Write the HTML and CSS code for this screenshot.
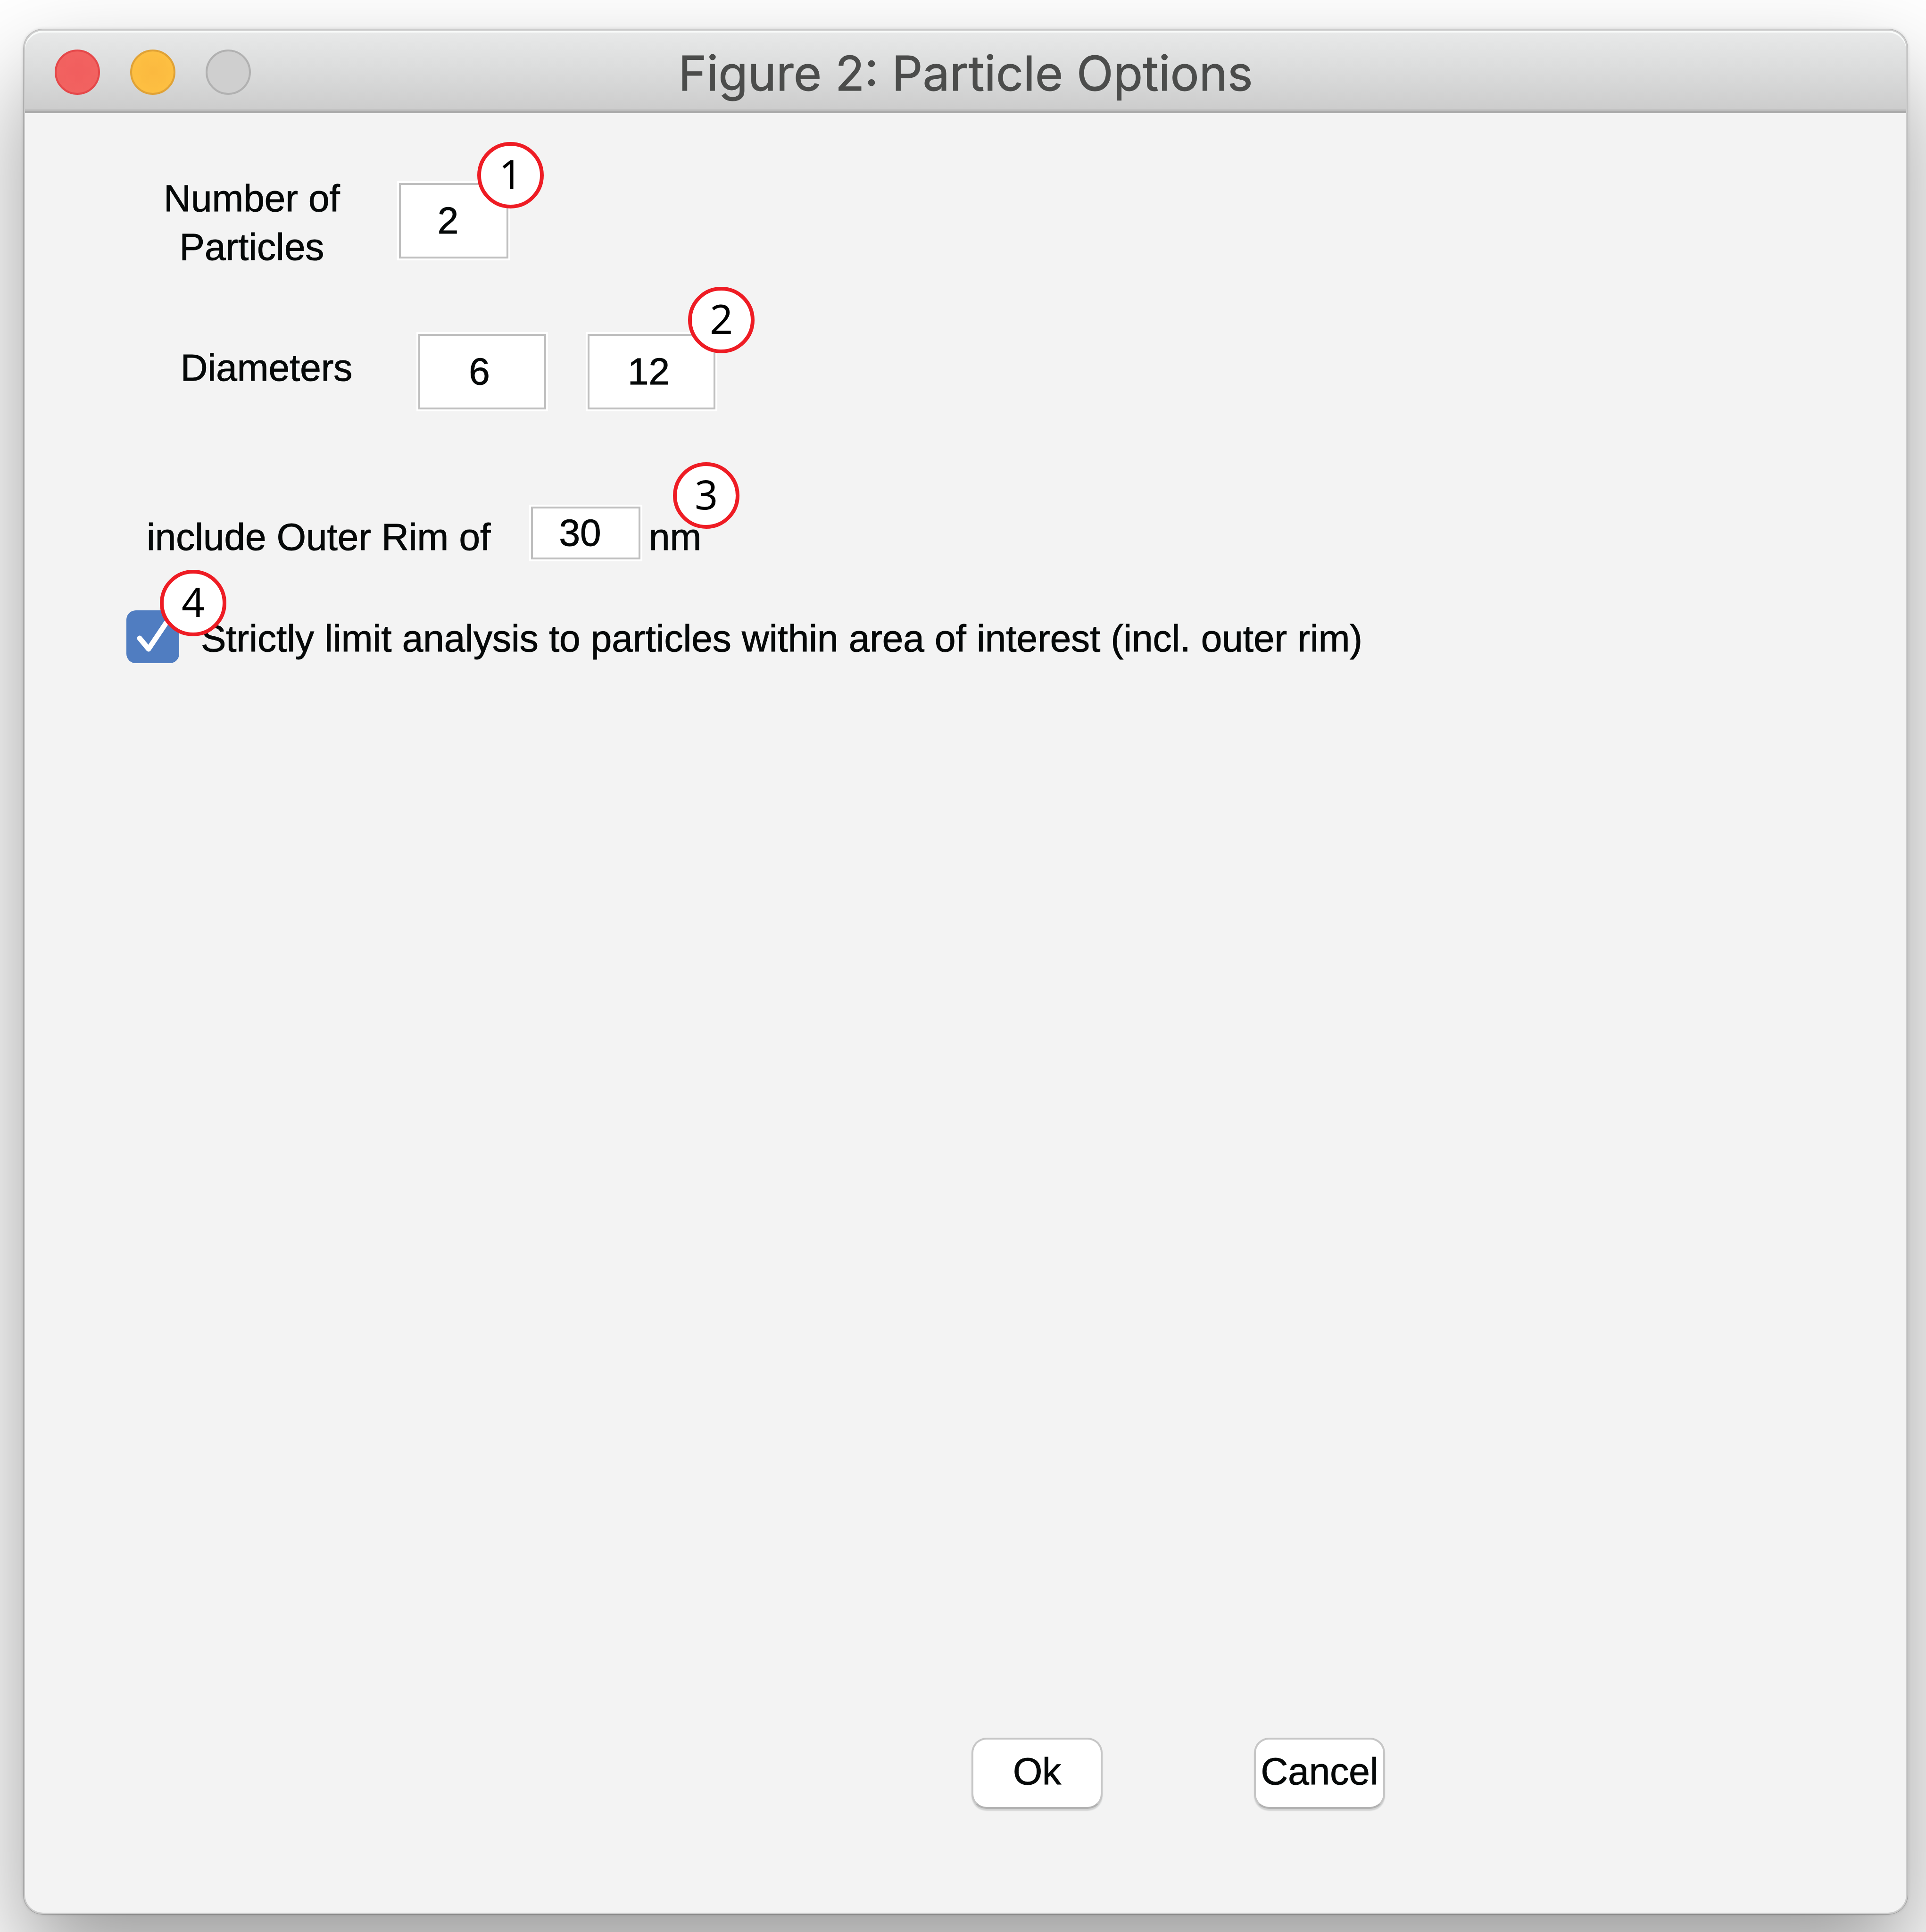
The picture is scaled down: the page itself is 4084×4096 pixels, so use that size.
FILE: index.html
```
<!DOCTYPE html>
<html lang="en">
<head>
<meta charset="utf-8">
<title>Figure 2: Particle Options</title>
<link rel="stylesheet" href="styles.css">
</head>
<body>
<main class="window">
  <header class="titlebar">
    <div class="lights">
      <button class="light light-close" type="button" aria-label="Close"></button>
      <button class="light light-minimize" type="button" aria-label="Minimize"></button>
      <button class="light light-zoom" type="button" aria-label="Zoom" disabled></button>
    </div>
    <h1 class="title">Figure 2: Particle Options</h1>
  </header>
  <form class="options">
    <div class="row row-count">
      <label class="label label-short" for="count">Number of Particles</label>
      <div class="anchor anchor-count">
        <input class="field field-count" id="count" type="text" value="2">
        <span class="badge badge-corner">1</span>
      </div>
    </div>
    <div class="row row-diameters">
      <label class="label label-short label-diameters" for="diameter-1">Diameters</label>
      <div class="pair">
        <input class="field field-diameter" id="diameter-1" type="text" value="6">
        <div class="anchor">
          <input class="field field-diameter" id="diameter-2" type="text" value="12" aria-label="Second diameter">
          <span class="badge badge-edge">2</span>
        </div>
      </div>
    </div>
    <div class="row row-rim">
      <label class="label label-rim" for="rim">include Outer Rim of</label>
      <input class="field field-rim" id="rim" type="text" value="30">
      <div class="anchor unit">
        <span class="label">nm</span>
        <span class="badge badge-unit">3</span>
      </div>
    </div>
    <div class="row row-strict">
      <div class="anchor check">
        <input class="check-input" id="strict" type="checkbox" checked>
        <svg class="check-mark" viewBox="0 0 112 112" aria-hidden="true"><path d="M28 59 47 82 84 27"/></svg>
        <span class="badge badge-check">4</span>
      </div>
      <label class="label label-strict" for="strict">Strictly limit analysis to particles within area of interest (incl. outer rim)</label>
    </div>
    <div class="actions">
      <button class="button" type="submit">Ok</button>
      <button class="button" type="button">Cancel</button>
    </div>
  </form>
</main>
</body>
</html>
```
FILE: styles.css
```
* {
  box-sizing: border-box;
}

body {
  margin: 0;
  min-height: 100vh;
  display: flex;
  overflow: hidden;
  background: #fff;
  color: #050808;
  font-family: "Liberation Sans", Arial, sans-serif;
  font-size: 80px;
  line-height: 103px;
}

.window {
  flex: 1;
  display: flex;
  flex-direction: column;
  margin: 61px 38px 37px 49px;
  border: 4px solid rgba(0, 0, 0, 0.2);
  border-radius: 42px;
  background: #f3f3f3;
  background-clip: padding-box;
  box-shadow: 0 104px 210px rgba(0, 0, 0, 0.39), 0 0 6px rgba(0, 0, 0, 0.12);
}

.titlebar {
  display: grid;
  grid-template-columns: 1fr auto 1fr;
  align-items: center;
  height: 175px;
  padding: 0 63px;
  border-bottom: 4px solid #a8a8a8;
  border-radius: 38px 38px 0 0;
  background: linear-gradient(#e8e9e9, #dcdddd 45%, #cccccc);
  box-shadow: inset 0 4px #f9fbfa, inset 0 -4px #bdbdbd;
}

.lights {
  display: flex;
  gap: 64px;
  padding-top: 4px;
}

.light {
  width: 96px;
  height: 96px;
  padding: 0;
  border: 4px solid;
  border-radius: 50%;
}

.light-close {
  border-color: #e5484a;
  background: radial-gradient(#f15e5e, #f26461);
}

.light-minimize {
  border-color: #e0a236;
  background: radial-gradient(#fbb93f, #fec243);
}

.light-zoom {
  border-color: #b1b1b1;
  background: #cfcfcf;
}

.title {
  margin: 0;
  padding-top: 8px;
  color: #4b4c4b;
  font-family: Inter, Roboto, sans-serif;
  font-size: 102px;
  font-weight: 400;
  line-height: 120px;
  -webkit-text-stroke: 1px;
}

.options {
  flex: 1;
  display: flex;
  flex-direction: column;
}

.row {
  display: flex;
  align-items: flex-start;
}

.row-count {
  gap: 112px;
  margin: 129px 0 0 281px;
}

.row-diameters {
  gap: 122px;
  margin: 133px 0 0 312px;
}

.row-rim {
  margin: 206px 0 0 258px;
}

.row-strict {
  gap: 46px;
  margin: 104px 0 0 215px;
}

.label,
.field,
.button {
  -webkit-text-stroke: 1px;
}

.label-short {
  width: 400px;
  text-align: center;
}

.label-diameters {
  padding-top: 20px;
}

.label-rim {
  width: 743px;
  padding-top: 13px;
}

.label-strict {
  padding-top: 8px;
}

.anchor {
  position: relative;
}

.anchor-count {
  margin-top: 19px;
}

.pair {
  display: flex;
  gap: 88px;
}

.field {
  display: block;
  height: 160px;
  margin: 0;
  padding: 0 24px 0 0;
  border: 4px solid #bfbfbf;
  border-radius: 0;
  outline: 4px solid #fff;
  background: #fff;
  color: inherit;
  font: inherit;
  text-align: center;
}

.field-count {
  width: 232px;
}

.field-diameter {
  width: 271px;
  padding-right: 12px;
}

.field-rim {
  width: 232px;
  height: 112px;
  margin-left: 72px;
}

.unit {
  margin-left: 18px;
  padding-top: 13px;
}

.badge {
  position: absolute;
  display: flex;
  align-items: center;
  justify-content: center;
  width: 141px;
  height: 141px;
  padding-bottom: 8px;
  border: 8px solid #ee1c24;
  border-radius: 50%;
  background: #fff;
  color: #000;
  font-family: "Noto Sans", "Open Sans", sans-serif;
  font-size: 86px;
  line-height: 120px;
}

.badge-corner {
  top: -87px;
  right: -75px;
}

.badge-edge {
  top: -100px;
  right: -83px;
}

.badge-unit {
  top: -94px;
  left: 51px;
}

.badge-check {
  top: -86px;
  left: 71px;
}

.check,
.check-input {
  width: 112px;
  height: 112px;
}

.check-input {
  display: block;
  appearance: none;
  margin: 0;
  border-radius: 20px;
  background: #507dc1;
}

.check {
  z-index: 1;
}

.check-mark {
  position: absolute;
  inset: 0;
  fill: none;
  stroke: #fff;
  stroke-width: 11;
  stroke-linecap: round;
  stroke-linejoin: round;
  pointer-events: none;
}

.actions {
  display: flex;
  gap: 321px;
  margin: auto 0 220px 2007px;
}

.button {
  width: 278px;
  height: 151px;
  padding: 0 0 8px;
  border: 4px solid #c6c6c6;
  border-bottom-color: #b2b2b2;
  border-radius: 32px;
  background: #fff;
  box-shadow: 0 4px 2px #d2d3d3;
  color: inherit;
  font: inherit;
}
```
